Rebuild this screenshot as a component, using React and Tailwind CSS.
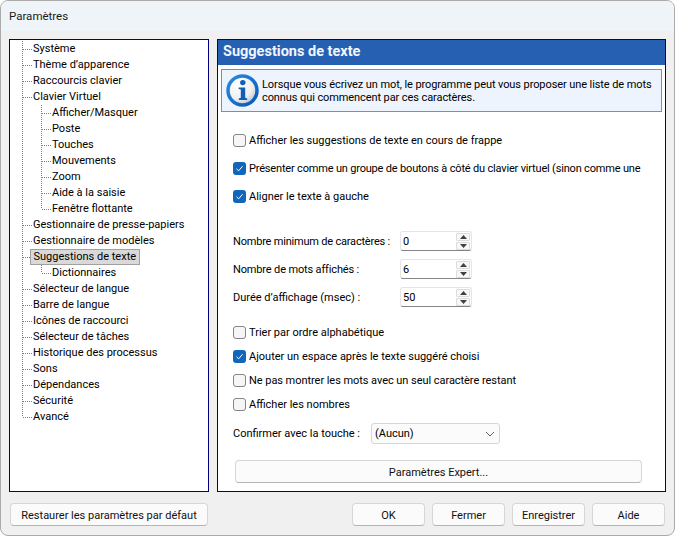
const TREE = [
  ["Système", 1], ["Thème d’apparence", 1], ["Raccourcis clavier", 1], ["Clavier Virtuel", 1],
  ["Afficher/Masquer", 2], ["Poste", 2], ["Touches", 2], ["Mouvements", 2], ["Zoom", 2], ["Aide à la saisie", 2], ["Fenêtre flottante", 2, "end"],
  ["Gestionnaire de presse-papiers", 1], ["Gestionnaire de modèles", 1], ["Suggestions de texte", 1, "sel"],
  ["Dictionnaires", 2, "end"],
  ["Sélecteur de langue", 1], ["Barre de langue", 1], ["Icônes de raccourci", 1], ["Sélecteur de tâches", 1], ["Historique des processus", 1],
  ["Sons", 1], ["Dépendances", 1], ["Sécurité", 1], ["Avancé", 1, "last"],
];

function Guide({ level, flag }) {
  const dots = { stroke: "#808080", strokeWidth: 1, strokeDasharray: "1 1", shapeRendering: "crispEdges", fill: "none" };
  return (
    <svg width={level === 1 ? 23 : 42} height="16" className="shrink-0">
      <path d={flag === "last" ? "M12.5 0V8" : "M12.5 0V16"} {...dots} />
      {level === 1 && <path d="M13 8.5H22" {...dots} />}
      {level === 2 && <path d={flag === "end" ? "M31.5 0V8" : "M31.5 0V16"} {...dots} />}
      {level === 2 && <path d="M32 8.5H41" {...dots} />}
    </svg>
  );
}

function TreeRow({ label, level, flag }) {
  return (
    <div className="flex h-4 items-center whitespace-nowrap">
      <Guide level={level} flag={flag} />
      {flag === "sel" ? (
        <span className="ml-[-3px] flex h-4 w-[110px] items-center border border-[#a0a0a0] bg-[#d9d9d9] pl-[2.5px] text-black">{label}</span>
      ) : (
        <span>{label}</span>
      )}
    </div>
  );
}

function Check({ checked, label, className = "" }) {
  return (
    <div className={`flex h-4 items-center gap-[3px] whitespace-nowrap ${className}`}>
      {checked ? (
        <span className="flex h-[13px] w-[13px] shrink-0 items-center justify-center rounded-[3px] bg-[#0f67bd]">
          <svg width="9" height="9" viewBox="0 0 9 9"><path d="M1.5 4.8 3.6 6.8 7.6 2.2" fill="none" stroke="#fff" strokeWidth="1" /></svg>
        </span>
      ) : (
        <span className="h-[13px] w-[13px] shrink-0 rounded-[3px] border border-[#858585] bg-[#f6f6f6]" />
      )}
      <span className="pt-[2px] leading-[14px]">{label}</span>
    </div>
  );
}

function Spin({ label, value, className = "", labelClass = "" }) {
  return (
    <div className={`flex h-5 items-center ${className}`}>
      <span className={`w-[167px] shrink-0 whitespace-nowrap pt-[2px] leading-[14px] ${labelClass}`}>{label}</span>
      <div className="flex h-5 w-[72px] items-center justify-between rounded-[3px] border border-[#e5e5e5] border-b-[#858585] bg-white pl-[2px] pr-[1px]">
        <span className="pt-[2px] leading-[14px]">{value}</span>
        <div className="flex flex-col gap-px">
          {[0, 1].map((d) => (
            <span key={d} className="flex h-2 w-[14px] items-center justify-center rounded-[1px] border border-[#dcdcdc] bg-[#f8f8f8]">
              <svg width="7" height="4" viewBox="0 0 7 4">
                <path d={d === 0 ? "M3.5 0 7 4H0Z" : "M0 0H7L3.5 4Z"} fill="#404040" />
              </svg>
            </span>
          ))}
        </div>
      </div>
    </div>
  );
}

function Btn({ children, className = "" }) {
  return (
    <button className={`flex h-[23px] items-center justify-center rounded-[4px] border border-[#d6d6d6] border-b-[#b5b5b5] bg-[#fbfbfb] pt-[2px] text-[#111] ${className}`}>
      {children}
    </button>
  );
}

export default function App() {
  return (
    <div className="flex h-[536px] w-[675px] flex-col overflow-hidden rounded-[8px] border border-[#ababab] bg-[#f0f0f0] font-['Roboto','Open_Sans',sans-serif] text-[11px] leading-4 text-black">
      <div className="flex h-[30px] shrink-0 items-center bg-[#eff4f9] pl-[8px] text-[11.5px] text-[#1a1a1a]">Paramètres</div>
      <div className="flex h-[461px] shrink-0 gap-2 pl-2 pt-[8px]">
        <div className="h-[453px] w-[200px] shrink-0 border border-[#000080] bg-white pt-[0.5px]">
          {TREE.map(([l, lv, f]) => <TreeRow key={l} label={l} level={lv} flag={f} />)}
        </div>
        <div className="flex h-[453px] w-[449px] shrink-0 flex-col border border-[#000080] bg-white">
          <div className="flex h-[25px] shrink-0 items-center bg-[#2560b2] pb-px pl-[5px] text-[14.5px] font-bold text-[#f2f6fc]">Suggestions de texte</div>
          <div className="mx-[3px] mt-[4px] flex h-[43px] shrink-0 items-center gap-[3px] border border-[#8c8c8c] bg-[#edf4fd] pl-[4px]">
            <svg width="33" height="33" viewBox="0 0 33 33" className="shrink-0">
              <defs>
                <radialGradient id="fill" cx="35%" cy="30%" r="80%">
                  <stop offset="0" stopColor="#ffffff" />
                  <stop offset="0.6" stopColor="#f0f0f0" />
                  <stop offset="1" stopColor="#b4bcc6" />
                </radialGradient>
                <linearGradient id="ring" x1="0" y1="0" x2="1" y2="1">
                  <stop offset="0" stopColor="#2a8be0" />
                  <stop offset="1" stopColor="#0a58b8" />
                </linearGradient>
              </defs>
              <circle cx="16.5" cy="16.5" r="14.5" fill="url(#fill)" stroke="url(#ring)" strokeWidth="3.5" />
              <circle cx="16.8" cy="8.6" r="2.7" fill="#0d5fb8" />
              <path d="M12.6 13.4H19.2V23.8L21.2 24.4V26H12.8V24.4L14.8 23.8V15.4L12.6 15Z" fill="#0d5fb8" />
            </svg>
            <div className="whitespace-nowrap leading-[13px] tracking-[-0.09px]">
              <div>Lorsque vous écrivez un mot, le programme peut vous proposer une liste de mots</div>
              <div>connus qui commencent par ces caractères.</div>
            </div>
          </div>
          <div className="flex flex-1 flex-col pl-[15px]">
            <div className="w-[410px] overflow-hidden">
              <Check className="mt-[20px]" label="Afficher les suggestions de texte en cours de frappe" />
              <Check checked className="mt-[12px] tracking-[-0.18px]" label="Présenter comme un groupe de boutons à côté du clavier virtuel (sinon comme une liste)" />
              <Check checked className="mt-[12px]" label="Aligner le texte à gauche" />
            </div>
            <Spin className="mt-[27px]" labelClass="tracking-[-0.2px]" label="Nombre minimum de caractères :" value="0" />
            <Spin className="mt-[8px]" labelClass="tracking-[-0.15px]" label="Nombre de mots affichés :" value="6" />
            <Spin className="mt-[8px]" label="Durée d’affichage (msec) :" value="50" />
            <Check className="mt-[17px]" label="Trier par ordre alphabétique" />
            <Check checked className="mt-[8px]" label="Ajouter un espace après le texte suggéré choisi" />
            <Check className="mt-[8px] tracking-[-0.05px]" label="Ne pas montrer les mots avec un seul caractère restant" />
            <Check className="mt-[8px]" label="Afficher les nombres" />
            <div className="mt-[11px] flex items-center">
              <span className="w-[138px] shrink-0 whitespace-nowrap">Confirmer avec la touche :</span>
              <div className="flex h-[21px] w-[129px] items-center justify-between rounded-[3px] border border-[#d6d6d6] bg-[#fbfbfb] pl-[3px] pr-[4px]">
                <span>(Aucun)</span>
                <svg width="10" height="6" viewBox="0 0 10 6"><path d="M1 1 5 5 9 1" fill="none" stroke="#606060" strokeWidth="1" /></svg>
              </div>
            </div>
            <Btn className="ml-[2px] mt-[16px] w-[407px]">Paramètres Expert...</Btn>
          </div>
        </div>
      </div>
      <div className="flex flex-1 items-start pl-[9px] pt-[11px]">
        <Btn className="w-[198px]">Restaurer les paramètres par défaut</Btn>
        <div className="ml-[144px] flex gap-[7px]">
          <Btn className="w-[73px] border-[#0f6cbd] border-b-[#0f6cbd]">OK</Btn>
          <Btn className="w-[73px]">Fermer</Btn>
          <Btn className="w-[73px]">Enregistrer</Btn>
          <Btn className="w-[73px]">Aide</Btn>
        </div>
      </div>
    </div>
  );
}
